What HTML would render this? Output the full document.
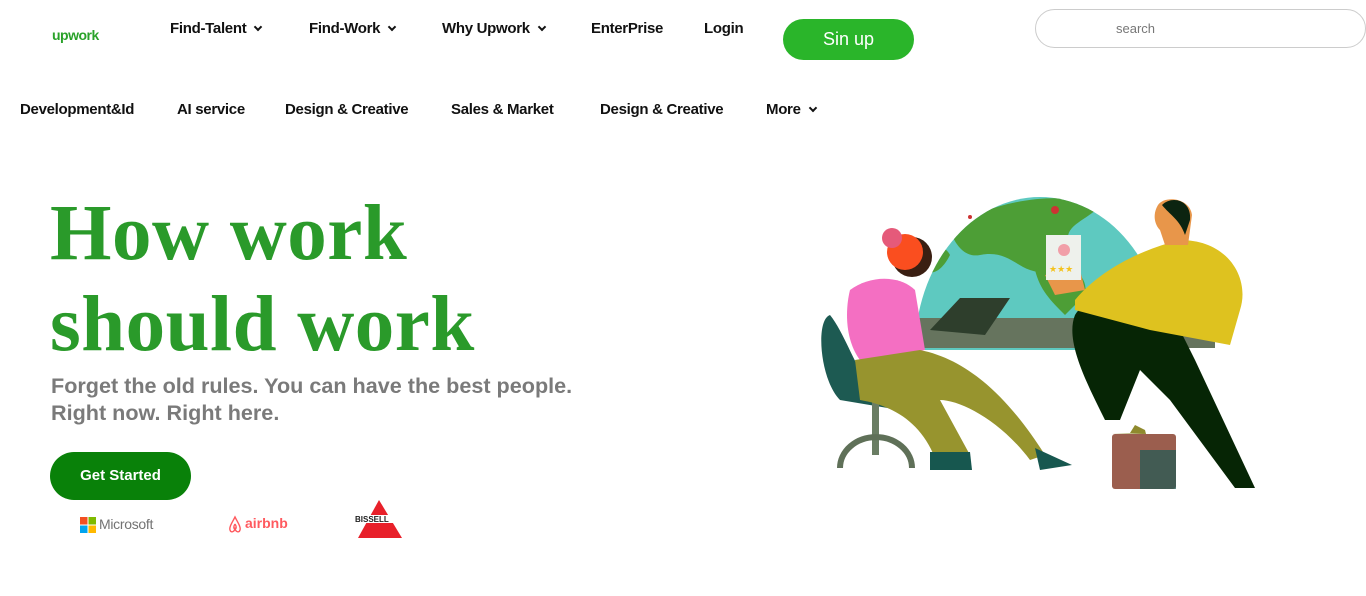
<!DOCTYPE html>
<html><head><meta charset="utf-8"><style>
*{margin:0;padding:0;box-sizing:border-box}
body{width:1366px;height:596px;background:#fff;font-family:"Liberation Sans",Arial,sans-serif;position:relative;overflow:hidden;color:#111}
.a{position:absolute;white-space:nowrap}
.nav{font-weight:bold;font-size:15px;letter-spacing:-0.3px}
.chev{display:inline-block;width:6px;height:6px;border-right:2px solid #111;border-bottom:2px solid #111;transform:rotate(45deg);margin-left:9px;position:relative;top:-3px}
h1{position:absolute;left:50px;top:188px;font-family:"Liberation Serif",serif;font-weight:bold;font-size:79px;line-height:91px;color:#2a9a2a;letter-spacing:0.5px}
.sub{left:51px;top:372px;font-size:21.6px;font-weight:bold;color:#7a7a7a;line-height:27px}
</style></head><body>
<div class="a" style="left:52px;top:27px;font-size:14px;font-weight:bold;color:#2aa22a;letter-spacing:-0.5px">upwork</div>
<div class="a nav" style="left:170px;top:20px">Find-Talent<span class="chev"></span></div>
<div class="a nav" style="left:309px;top:20px">Find-Work<span class="chev"></span></div>
<div class="a nav" style="left:442px;top:20px">Why Upwork<span class="chev"></span></div>
<div class="a nav" style="left:591px;top:20px">EnterPrise</div>
<div class="a nav" style="left:704px;top:20px">Login</div>
<div class="a" style="left:783px;top:19px;width:131px;height:41px;border-radius:21px;background:#2ab52a;color:#fff;font-size:18px;text-align:center;line-height:41px">Sin up</div>
<div class="a" style="left:1035px;top:9px;width:331px;height:39px;border:1px solid #ccc;border-radius:20px;font-size:13px;color:#777;padding-left:80px;line-height:37px">search</div>
<div class="a nav" style="left:20px;top:101px">Development&amp;Id</div>
<div class="a nav" style="left:177px;top:101px">AI service</div>
<div class="a nav" style="left:285px;top:101px">Design &amp; Creative</div>
<div class="a nav" style="left:451px;top:101px">Sales &amp; Market</div>
<div class="a nav" style="left:600px;top:101px">Design &amp; Creative</div>
<div class="a nav" style="left:766px;top:101px">More<span class="chev"></span></div>
<h1>How work<br>should work</h1>
<div class="a sub">Forget the old rules. You can have the best people.<br>Right now. Right here.</div>
<div class="a" style="left:50px;top:452px;width:141px;height:48px;border-radius:24px;background:#098109;color:#fff;font-weight:bold;font-size:15px;text-align:center;line-height:48px">Get Started</div>
<svg class="a" style="left:80px;top:517px" width="16" height="16"><rect width="7.5" height="7.5" fill="#f25022"/><rect x="8.5" width="7.5" height="7.5" fill="#7fba00"/><rect y="8.5" width="7.5" height="7.5" fill="#00a4ef"/><rect x="8.5" y="8.5" width="7.5" height="7.5" fill="#ffb900"/></svg>
<div class="a" style="left:99px;top:516px;font-size:14px;color:#737373;letter-spacing:-0.3px">Microsoft</div>
<svg class="a" style="left:227px;top:515px" width="16" height="18"><path d="M8 2C5 8 2 12 3 15s4 2 5-1c1 3 4 4 5 1S11 8 8 2z M8 9c-2 3-1 5 0 5s2-2 0-5" fill="none" stroke="#ff5a5f" stroke-width="1.4"/></svg>
<div class="a" style="left:245px;top:515px;font-size:14px;color:#ff5a5f;font-weight:bold">airbnb</div>
<svg class="a" style="left:354px;top:500px" width="56" height="38"><polygon points="25,0 4,38 48,38" fill="#e8202a"/><rect x="0" y="15" width="56" height="8" fill="#fff"/><text x="1" y="22" font-family="Liberation Sans" font-size="8" font-weight="bold" fill="#222">BISSELL</text></svg>
<svg class="a" style="left:800px;top:190px" width="480" height="310" viewBox="0 0 480 310">
<defs><clipPath id="g"><path d="M115 160 A125 153 0 0 1 365 160Z"/></clipPath></defs>
<path d="M115 160 A125 153 0 0 1 365 160Z" fill="#5ec9c0"/>
<g clip-path="url(#g)" fill="#4d9e36">
<path d="M150 40 C190 10 260 0 300 15 C290 30 260 35 270 55 C285 70 260 90 230 80 C215 75 205 60 180 65 C165 68 155 55 150 40Z"/>
<path d="M235 80 C260 70 290 80 285 105 L265 125 C250 110 240 100 235 80Z"/>
<path d="M115 70 C130 50 145 55 150 65 C140 85 125 90 115 70Z"/>
</g>
<rect x="115" y="128" width="300" height="30" fill="#66745e"/>
<path d="M30 125 C15 130 20 190 40 210 L100 220 L90 210 C60 200 50 150 30 125Z" fill="#1d5a52"/>
<rect x="72" y="210" width="7" height="55" fill="#6a7d63"/><path d="M40 278 A35 30 0 0 1 112 278" fill="none" stroke="#5f7058" stroke-width="6"/>
<path d="M50 100 C70 85 100 85 115 100 L125 160 L60 170 C45 150 45 120 50 100Z" fill="#f46fc2"/>
<path d="M55 170 L120 160 C170 170 210 210 245 265 L230 270 C200 230 160 210 140 210 L170 265 L135 268 C120 230 90 215 60 210Z" fill="#97942e"/>
<path d="M130 262 L170 262 L172 280 L130 280Z" fill="#17574f"/><path d="M235 258 L272 275 L240 280Z" fill="#17574f"/>
<circle cx="112" cy="67" r="20" fill="#3a1f12"/><circle cx="105" cy="62" r="18" fill="#fa4e1f"/><circle cx="92" cy="48" r="10" fill="#e55a7a"/>
<path d="M130 140 L160 108 L210 108 L185 145Z" fill="#2e3e2c"/>
<path d="M275 125 C290 100 340 100 370 120 L395 170 L455 298 L435 298 L370 210 L340 180 L320 230 L305 230 C285 190 265 150 275 125Z" fill="#062505"/>
<path d="M275 110 C300 80 340 60 380 50 C430 50 450 90 440 120 L430 155 L350 140 L275 120Z" fill="#dec21f"/>
<path d="M245 85 L280 80 L285 100 L255 105Z" fill="#e8964a"/>
<rect x="246" y="45" width="35" height="45" fill="#eef1ec"/><circle cx="264" cy="60" r="6" fill="#f19fa8"/>
<text x="249" y="82" font-size="9" fill="#f4c21c">★★★</text>
<path d="M358 15 C365 5 390 8 392 25 L388 55 L365 55 L360 40 C355 35 352 25 358 15Z" fill="#e8964a"/><path d="M362 15 C372 5 392 10 390 30 L385 45 C380 30 370 25 362 15Z" fill="#0c2410"/>
<rect x="312" y="244" width="64" height="55" rx="3" fill="#9b5e4e"/><rect x="340" y="260" width="36" height="39" fill="#1c5a55" opacity=".7"/>
<path d="M312 243 L330 243 L335 235 L345 240 L346 244 Z" fill="#8f8a2e"/>
<circle cx="255" cy="20" r="4" fill="#c33"/><circle cx="170" cy="27" r="2" fill="#c33"/>
</svg>
</body></html>
